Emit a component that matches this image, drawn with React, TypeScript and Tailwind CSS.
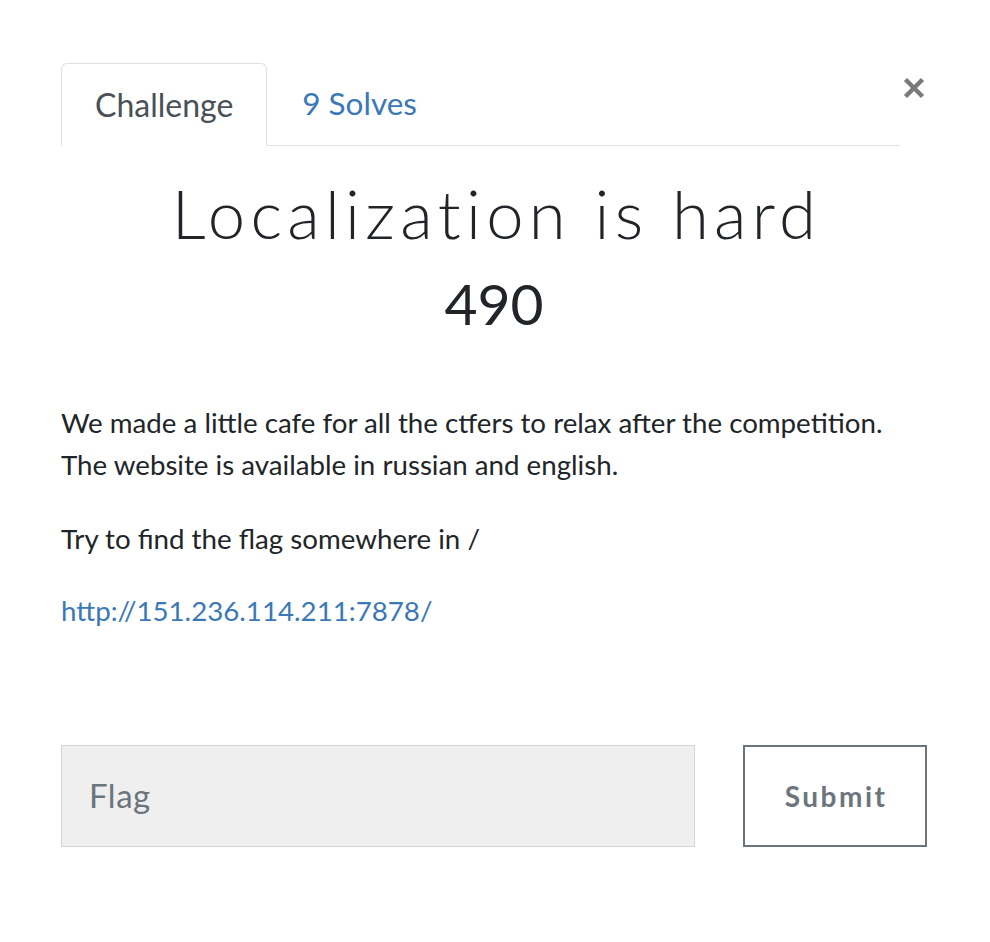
import React from "react";

export default function App() {
  return (
    <div className="w-[990px] h-[942px] bg-white text-[#212529]" style={{ fontFamily: "Lato, 'Open Sans', sans-serif" }}>
      <div className="pt-[63px] pl-[61px] pr-[63px]">
        <div className="flex items-start">
          <div className="flex-1 flex border-b border-[#dee2e6]">
            <div className="h-[83px] -mb-px px-[33px] flex items-center border border-[#dee2e6] border-b-white bg-white rounded-t-[6px] text-[32px] text-[#495057]">
              Challenge
            </div>
            <div className="h-[82px] px-[35px] flex items-center text-[31.5px] text-[#3b78b8]">9 Solves</div>
          </div>
          <div className="w-[27px] flex justify-end pt-[14px] pr-[2px]">
            <svg width="22" height="22" viewBox="0 0 22 22">
              <path d="M2.5 2.5 L19.5 19.5 M19.5 2.5 L2.5 19.5" stroke="#7a7a7a" strokeWidth="4.5" strokeLinecap="butt" />
            </svg>
          </div>
        </div>
        <div>
          <h1 className="text-center text-[67px] leading-none font-light tracking-[5.3px] pl-[5px] mt-[34px]">Localization is hard</h1>
          <div className="text-center text-[57px] leading-none mt-[28px]">490</div>
          <div className="mt-[70px] text-[27.7px] leading-[42px]">
            <p>We made a little cafe for all the ctfers to relax after the competition.<br />The website is available in russian and english.</p>
            <p className="mt-[32px]">Try to find the flag somewhere in /</p>
            <p className="mt-[30px]"><a className="text-[#3b78b8]">http://151.236.114.211:7878/</a></p>
          </div>
        </div>
        <div className="mt-[113px] flex items-stretch">
          <div className="w-[635px] h-[102px] bg-[#efefef] border border-[#ced4da] flex items-center pl-[27px] text-[33px] tracking-[0.5px] text-[#6c757d]">Flag</div>
          <div className="ml-[48px] w-[184px] h-[102px] border-2 border-[#6c757d] flex items-center justify-center text-[28px] font-bold tracking-[2.5px] pl-[2px] text-[#6c757d]">Submit</div>
        </div>
      </div>
    </div>
  );
}
